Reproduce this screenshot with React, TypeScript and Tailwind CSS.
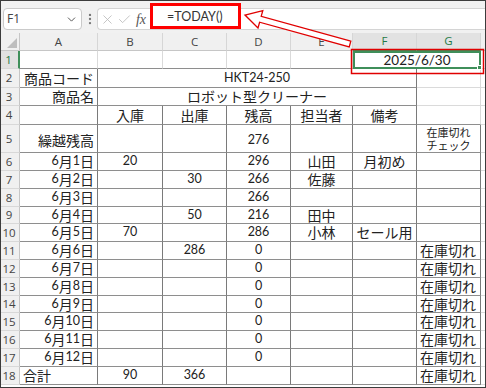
import { Check, ChevronDown, EllipsisVertical, X } from "lucide-react";
import type { ReactNode } from "react";

const W = ["w-[78px]", "w-[65px]", "w-[64px]", "w-[64px]", "w-[62px]", "w-[64px]", "w-[64px]"];
const LETTERS = ["A", "B", "C", "D", "E", "F", "G"];

// table lines vs. plain sheet gridlines
const T_R = "border-r border-r-[#7a7a7a]";
const T_B = "border-b border-b-[#8e8e8e]";
const G_R = "border-r border-r-[#dadada]";
const G_B = "border-b border-b-[#dadada]";

const ALIGN = {
  l: "justify-start",
  c: "justify-center",
  r: "justify-end",
};

const days = [
  ["6月1日", "20", "", "296", "山田", "月初め", ""],
  ["6月2日", "", "30", "266", "佐藤", "", ""],
  ["6月3日", "", "", "266", "", "", ""],
  ["6月4日", "", "50", "216", "田中", "", ""],
  ["6月5日", "70", "", "286", "小林", "セール用", ""],
  ["6月6日", "", "286", "0", "", "", "在庫切れ"],
  ["6月7日", "", "", "0", "", "", "在庫切れ"],
  ["6月8日", "", "", "0", "", "", "在庫切れ"],
  ["6月9日", "", "", "0", "", "", "在庫切れ"],
  ["6月10日", "", "", "0", "", "", "在庫切れ"],
  ["6月11日", "", "", "0", "", "", "在庫切れ"],
  ["6月12日", "", "", "0", "", "", "在庫切れ"],
  ["合計", "90", "366", "", "", "", "在庫切れ"],
];

const dayHeights = [
  "h-[18px]", "h-[18px]", "h-[18px]", "h-[17px]", "h-[18px]", "h-[18px]", "h-[18px]",
  "h-[18px]", "h-[17px]", "h-[18px]", "h-[18px]", "h-[18px]", "h-[18px]",
];

// latin runs get a smaller size than the kana/kanji around them
const Txt = ({ t, latin = "text-[12.5px]" }: { t: string; latin?: string }) => (
  <>
    {t
      .split(/([\x20-\x7e]+)/)
      .filter(Boolean)
      .map((s, i) =>
        /^[\x20-\x7e]+$/.test(s) ? (
          <span key={i} className={latin}>{s}</span>
        ) : (
          <span key={i}>{s}</span>
        )
      )}
  </>
);

const Cell = ({ w, a = "c", cls = "", children }: { w: string; a?: "l" | "c" | "r"; cls?: string; children?: ReactNode }) => (
  <div className={`${w} h-full shrink-0 flex items-center whitespace-nowrap px-[3px] ${ALIGN[a]} ${cls}`}>
    {children}
  </div>
);

const RowHead = ({ n, sel = false }: { n: number; sel?: boolean }) => (
  <div
    className={`w-[19px] h-full shrink-0 flex items-center justify-center pr-[2px] font-['Open_Sans'] text-[11.5px] border-b border-b-[#d8d8d8] ${
      sel ? "bg-[#e1e1e1] text-[#1f7a46] border-r-2 border-r-[#3f8f5a]" : "bg-[#f0f0f0] text-[#444] border-r border-r-[#c6c6c6]"
    }`}
  >
    {n}
  </div>
);

const Filler = () => <div className={`flex-1 h-full ${G_B}`} />;

export default function App() {
  return (
    <div className="relative w-[486px] h-[388px] overflow-hidden border border-[#3c3c3c] bg-white font-['Lato','Noto_Sans_CJK_JP',sans-serif] text-[14px] text-[#222]">
      {/* formula bar */}
      <div className="flex h-[32px] items-start bg-[#f1f1f1] pt-[7px] pl-[2px]">
        <div className="flex h-[22px] w-[79px] items-center justify-between rounded-[4px] border border-[#cacaca] bg-white px-[3px]">
          <span className="font-['Open_Sans'] text-[12px] text-[#444]">F1</span>
          <ChevronDown size={13} strokeWidth={1.8} className="text-[#555]" />
        </div>
        <div className="flex h-[22px] w-[15px] items-center justify-center">
          <EllipsisVertical size={14} className="text-[#777]" />
        </div>
        <div className="flex h-[22px] flex-1 items-start rounded-l-[4px] border border-r-0 border-[#d4d4d4] bg-white">
          <div className="flex h-full w-[18px] items-center justify-center">
            <X size={15} strokeWidth={1.3} className="text-[#b9b9b9]" />
          </div>
          <div className="flex h-full w-[16px] items-center justify-center">
            <Check size={15} strokeWidth={1.3} className="text-[#b9b9b9]" />
          </div>
          <div className="flex h-full w-[18px] items-center justify-center font-['Liberation_Serif'] text-[14px] italic text-[#555]">
            fx
          </div>
          <div className="-mt-[6px] flex h-[26px] w-[91px] items-center border-[3px] border-[#ff0000] bg-white pl-[14px] pt-[2px] text-[12.5px] text-[#333]">
            =TODAY()
          </div>
        </div>
      </div>

      {/* column headers */}
      <div className="flex h-[18px]">
        <div className="relative w-[19px] h-full shrink-0 bg-[#f0f0f0] border-r border-r-[#c6c6c6] border-b border-b-[#c6c6c6]">
          <svg className="absolute right-[2px] bottom-[2px]" width="10" height="10" viewBox="0 0 10 10">
            <polygon points="10,0 10,10 0,10" fill="#bdbdbd" />
          </svg>
        </div>
        {LETTERS.map((l, i) => (
          <div
            key={l}
            className={`${W[i]} h-full shrink-0 flex items-center justify-center font-['Open_Sans'] text-[11.5px] border-r border-r-[#d6d6d6] ${
              i >= 5 ? "bg-[#e2e2e2] text-[#1f7a46] border-b-2 border-b-[#3f8f5a]" : "bg-[#f0f0f0] text-[#444] border-b border-b-[#c6c6c6]"
            }`}
          >
            {l}
          </div>
        ))}
        <div className="flex-1 h-full bg-[#f0f0f0] border-b border-b-[#c6c6c6]" />
      </div>

      {/* row 1 */}
      <div className="flex h-[18px]">
        <RowHead n={1} sel />
        {[0, 1, 2, 3, 4].map((i) => (
          <Cell key={i} w={W[i]} cls={`${G_R} ${T_B}`} />
        ))}
        <div className="relative w-[128px] h-full shrink-0 flex items-center justify-center border-2 border-[#3f8f5a] text-[13.5px]">
          2025/6/30
          <div className="absolute -right-[3px] -bottom-[3px] w-[5px] h-[5px] bg-[#3f8f5a] border border-white" />
        </div>
        <Filler />
      </div>

      {/* row 2 */}
      <div className="flex h-[19px]">
        <RowHead n={2} />
        <Cell w={W[0]} a="r" cls={`${T_R} ${T_B}`}>商品コード</Cell>
        <Cell w="w-[319px]" cls={`${T_R} ${T_B}`}>
          <Txt t="HKT24-250" />
        </Cell>
        <Cell w={W[6]} cls={`${G_R} ${G_B}`} />
        <Filler />
      </div>

      {/* row 3 */}
      <div className="flex h-[18px]">
        <RowHead n={3} />
        <Cell w={W[0]} a="r" cls={`${T_R} ${T_B}`}>商品名</Cell>
        <Cell w="w-[319px]" cls={`${T_R} ${T_B}`}>ロボット型クリーナー</Cell>
        <Cell w={W[6]} cls={`${G_R} ${G_B}`} />
        <Filler />
      </div>

      {/* row 4 */}
      <div className="flex h-[19px]">
        <RowHead n={4} />
        <Cell w={W[0]} cls={`${T_R} ${T_B}`} />
        {["入庫", "出庫", "残高", "担当者", "備考"].map((h, i) => (
          <Cell key={h} w={W[i + 1]} cls={`${T_R} ${T_B}`}>{h}</Cell>
        ))}
        <Cell w={W[6]} cls={`${G_R} ${T_B}`} />
        <Filler />
      </div>

      {/* row 5 */}
      <div className="flex h-[28px]">
        <RowHead n={5} />
        <Cell w={W[0]} a="r" cls={`${T_R} ${T_B} items-end pb-[1px]`}>繰越残高</Cell>
        <Cell w={W[1]} cls={`${T_R} ${T_B}`} />
        <Cell w={W[2]} cls={`${T_R} ${T_B}`} />
        <Cell w={W[3]} cls={`${T_R} ${T_B} items-end pb-[2px]`}>
          <Txt t="276" />
        </Cell>
        <Cell w={W[4]} cls={`${T_R} ${T_B}`} />
        <Cell w={W[5]} cls={`${T_R} ${T_B}`} />
        <div className={`${W[6]} h-full shrink-0 flex flex-col items-center justify-center text-[11px] leading-[13px] ${T_R} ${T_B}`}>
          <span>在庫切れ</span>
          <span>チェック</span>
        </div>
        <Filler />
      </div>

      {/* rows 6-18 */}
      {days.map((row, r) => (
        <div key={r} className={`flex ${dayHeights[r]}`}>
          <RowHead n={r + 6} />
          {row.map((v, i) => (
            <Cell
              key={i}
              w={W[i]}
              a={i === 0 ? (r === 12 ? "l" : "r") : i === 6 ? "l" : "c"}
              cls={`${T_R} ${T_B}`}
            >
              {v && <Txt t={v} />}
            </Cell>
          ))}
          <Filler />
        </div>
      ))}

      {/* red callout: box round F1:G1 and arrow up to the formula */}
      <svg className="pointer-events-none absolute -left-px -top-px" width="486" height="388" viewBox="0 0 486 388">
        <rect x="351.5" y="49.5" width="132" height="24" fill="none" stroke="#e00000" strokeWidth="1.5" />
        <polygon
          points="350.8,41.1 261.2,16.4 262.8,10.6 245,15 258,27.9 259.6,22.2 349.2,46.9"
          fill="#ffffff"
          stroke="#e00000"
          strokeWidth="1.3"
          strokeLinejoin="miter"
        />
      </svg>
    </div>
  );
}
